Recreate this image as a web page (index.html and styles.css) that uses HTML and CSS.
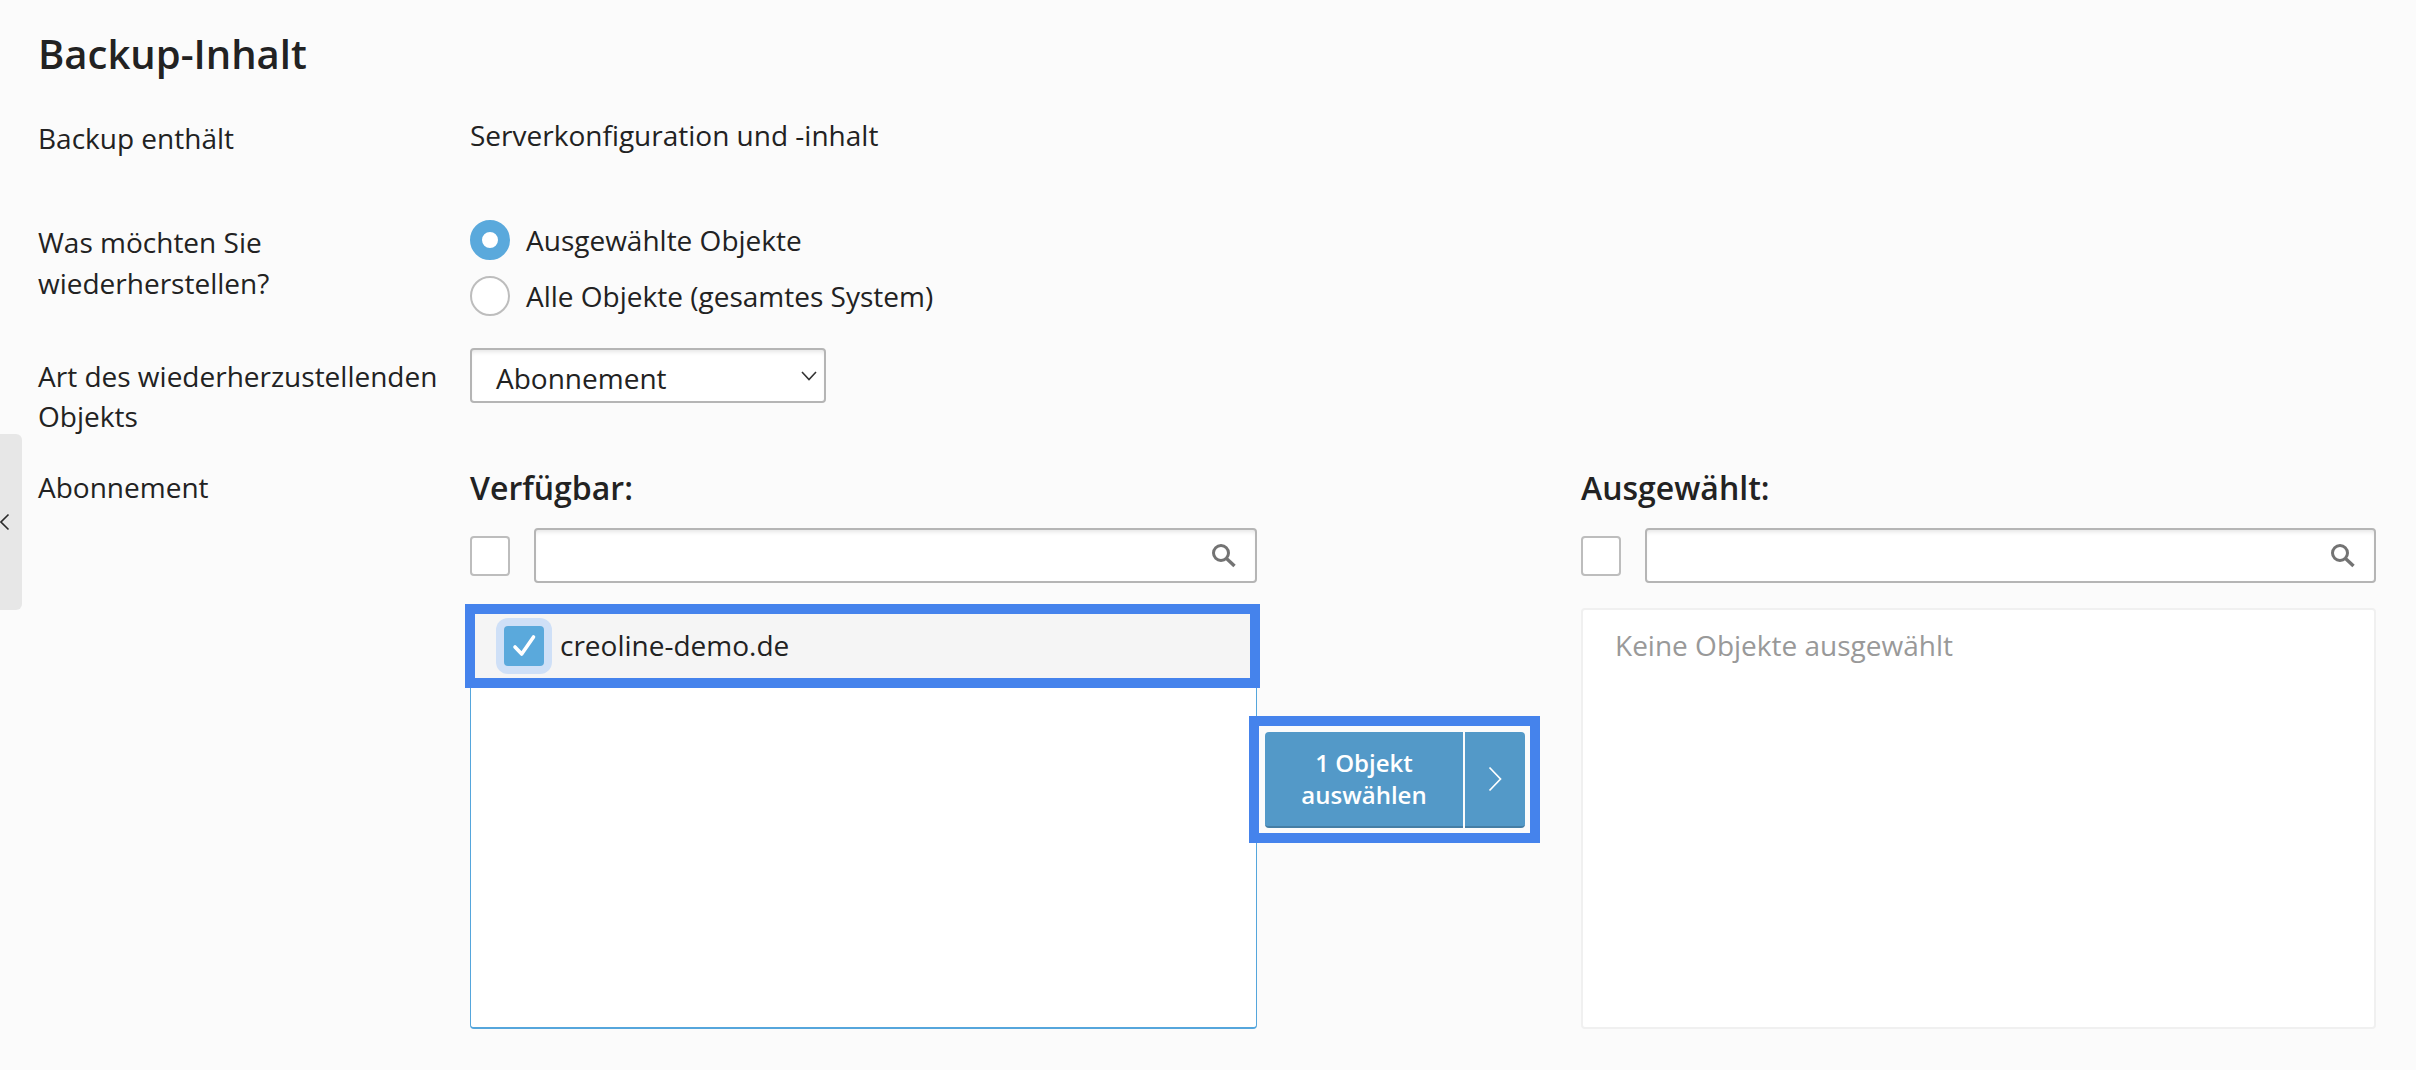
FILE: index.html
```html
<!DOCTYPE html>
<html lang="de">
<head>
<meta charset="utf-8">
<title>Backup-Inhalt</title>
<link rel="stylesheet" href="styles.css">
</head>
<body>
<aside class="handle">
  <svg class="handle-icon" width="10" height="18" viewBox="0 0 10 18"><path d="M8.5 1.5 L1 9 L8.5 16.5" fill="none" stroke="#2b2b2b" stroke-width="1.6"/></svg>
</aside>
<main class="page">
  <h2 class="title">Backup-Inhalt</h2>
  <div class="row row-contains">
    <div class="label">Backup enthält</div>
    <div class="value">Serverkonfiguration und -inhalt</div>
  </div>
  <div class="row row-restore">
    <div class="label">Was möchten Sie wiederherstellen?</div>
    <div class="radios">
      <div class="radio-line"><span class="radio radio-on"></span><span>Ausgewählte Objekte</span></div>
      <div class="radio-line"><span class="radio"></span><span>Alle Objekte (gesamtes System)</span></div>
    </div>
  </div>
  <div class="row row-type">
    <div class="label">Art des wiederherzustellenden Objekts</div>
    <div class="select">
      <span>Abonnement</span>
      <svg width="16" height="10" viewBox="0 0 16 10"><path d="M1 1 L8 8.5 L15 1" fill="none" stroke="#333" stroke-width="1.6"/></svg>
    </div>
  </div>
  <div class="row row-sub">
    <div class="label">Abonnement</div>
    <div class="transfer">
      <section class="pane">
        <h3 class="pane-title">Verfügbar:</h3>
        <div class="tools">
          <span class="check"></span>
          <div class="search">
            <input class="search-input" type="text" aria-label="Suche">
            <svg class="search-icon" width="26" height="26" viewBox="0 0 26 26"><circle cx="10" cy="10" r="7.5" fill="none" stroke="#737373" stroke-width="3"/><path d="M15.5 15.5 L23.5 23" fill="none" stroke="#737373" stroke-width="3.4"/></svg>
          </div>
        </div>
        <div class="list list-active">
          <div class="item mark">
            <span class="halo"><span class="check-on"><svg width="26" height="24" viewBox="0 0 26 24"><path d="M4 13 L10.7 20 L22.5 3" fill="none" stroke="#fff" stroke-width="3.6" stroke-linecap="round" stroke-linejoin="round"/></svg></span></span>
            <span class="item-text">creoline-demo.de</span>
          </div>
        </div>
      </section>
      <div class="mid">
        <div class="action mark">
          <div class="btn-main">1 Objekt auswählen</div>
          <div class="btn-arrow"><svg width="14" height="26" viewBox="0 0 14 26"><path d="M1.5 1.5 L12.5 13 L1.5 24.5" fill="none" stroke="#fff" stroke-width="1.7"/></svg></div>
        </div>
      </div>
      <section class="pane">
        <h3 class="pane-title">Ausgewählt:</h3>
        <div class="tools">
          <span class="check"></span>
          <div class="search">
            <input class="search-input" type="text" aria-label="Suche">
            <svg class="search-icon" width="26" height="26" viewBox="0 0 26 26"><circle cx="10" cy="10" r="7.5" fill="none" stroke="#737373" stroke-width="3"/><path d="M15.5 15.5 L23.5 23" fill="none" stroke="#737373" stroke-width="3.4"/></svg>
          </div>
        </div>
        <div class="list list-empty">Keine Objekte ausgewählt</div>
      </section>
    </div>
  </div>
</main>
</body>
</html>
```
FILE: styles.css
```css
* { box-sizing: border-box; }
html, body { margin: 0; height: 100%; }
body {
  background: #fbfbfb;
  color: #222;
  font-family: "Open Sans", "Noto Sans", sans-serif;
  font-size: 28px;
  line-height: 41px;
  overflow: hidden;
}
.page { padding: 30px 40px 0 38px; }
.handle {
  position: absolute;
  left: 0;
  top: 434px;
  width: 22px;
  height: 176px;
  background: #e7e7e7;
  border-radius: 0 6px 6px 0;
  display: flex;
  align-items: center;
}
.title {
  margin: 0;
  font-size: 40px;
  font-weight: 600;
  line-height: 48px;
}
.row { display: flex; }
.label { width: 432px; flex: none; }
.row-contains { margin-top: 40px; height: 104px; }
.value { margin-top: -3px; }
.row-restore { height: 126px; }
.radios { margin-top: -2px; display: flex; flex-direction: column; gap: 16px; }
.radio-line { display: flex; align-items: center; gap: 16px; height: 40px; }
.radio {
  width: 40px;
  height: 40px;
  border-radius: 50%;
  background: #fff;
  border: 2px solid #bdbdbd;
  flex: none;
}
.radio-on { background: #fff; border: 12px solid #5aa9dc; }
.row-type { height: 119px; }
.row-type .label { margin-top: 8px; line-height: 40px; }
.select {
  width: 356px;
  height: 55px;
  background: #fff;
  border: 2px solid #b5b5b5;
  border-radius: 4px;
  box-shadow: inset 0 4px 4px -2px #e6e6e6;
  padding: 3px 7px 0 24px;
  display: flex;
  justify-content: space-between;
  line-height: 50px;
}
.select svg { margin-top: 18px; }
.transfer {
  flex: 1;
  display: grid;
  grid-template-columns: 787px 324px 1fr;
}
.pane { min-width: 0; }
.pane-title {
  margin: 0;
  font-size: 32px;
  font-weight: 600;
  line-height: 41px;
}
.tools {
  margin-top: 20px;
  height: 55px;
  display: flex;
  align-items: center;
  gap: 24px;
}
.check {
  width: 40px;
  height: 40px;
  background: #fff;
  border: 2px solid #bdbdbd;
  border-radius: 4px;
  flex: none;
}
.search {
  flex: 1;
  height: 55px;
  background: #fff;
  border: 2px solid #b5b5b5;
  border-radius: 4px;
  box-shadow: inset 0 4px 4px -2px #e6e6e6;
  display: flex;
  align-items: center;
  padding-right: 18px;
}
.search-input {
  flex: 1;
  min-width: 0;
  height: 100%;
  border: 0;
  background: transparent;
  outline: 0;
}
.search-icon { flex: none; }
.list {
  margin-top: 25px;
  height: 421px;
  background: #fff;
  border-radius: 4px;
}
.list-active {
  border: 1px solid #55a6dc;
  border-bottom-width: 2px;
  padding: 5px 6px 0 4px;
}
.list-empty {
  border: 2px solid #f0f0f0;
  padding: 15px 32px;
  color: #999;
}
.mark { outline: 10px solid #4583ec; }
.item {
  height: 64px;
  background: #f5f5f5;
  display: flex;
  align-items: center;
  gap: 8px;
  padding-left: 21px;
}
.item-text { margin-top: -2px; }
.halo {
  width: 56px;
  height: 56px;
  background: #cfe0f7;
  border-radius: 12px;
  display: flex;
  align-items: center;
  justify-content: center;
}
.check-on {
  width: 40px;
  height: 40px;
  background: #5aa9dc;
  border-radius: 4px;
  display: flex;
  align-items: center;
  justify-content: center;
}
.mid { min-width: 0; }
.action {
  margin: 259px 0 0 2px;
  width: 271px;
  height: 107px;
  padding: 6px 5px 5px 6px;
  background: #fbfbfb;
  display: flex;
  color: #fff;
}
.btn-main {
  width: 198px;
  background: #5399c8;
  border-bottom: 2px solid #457ea5;
  border-radius: 4px 0 0 4px;
  font-size: 24px;
  font-weight: 600;
  line-height: 32px;
  text-align: center;
  padding: 15px 30px 0;
}
.btn-arrow {
  margin-left: 2px;
  flex: 1;
  background: #5399c8;
  border-bottom: 2px solid #457ea5;
  border-radius: 0 4px 4px 0;
  display: flex;
  align-items: center;
  justify-content: center;
}
```
